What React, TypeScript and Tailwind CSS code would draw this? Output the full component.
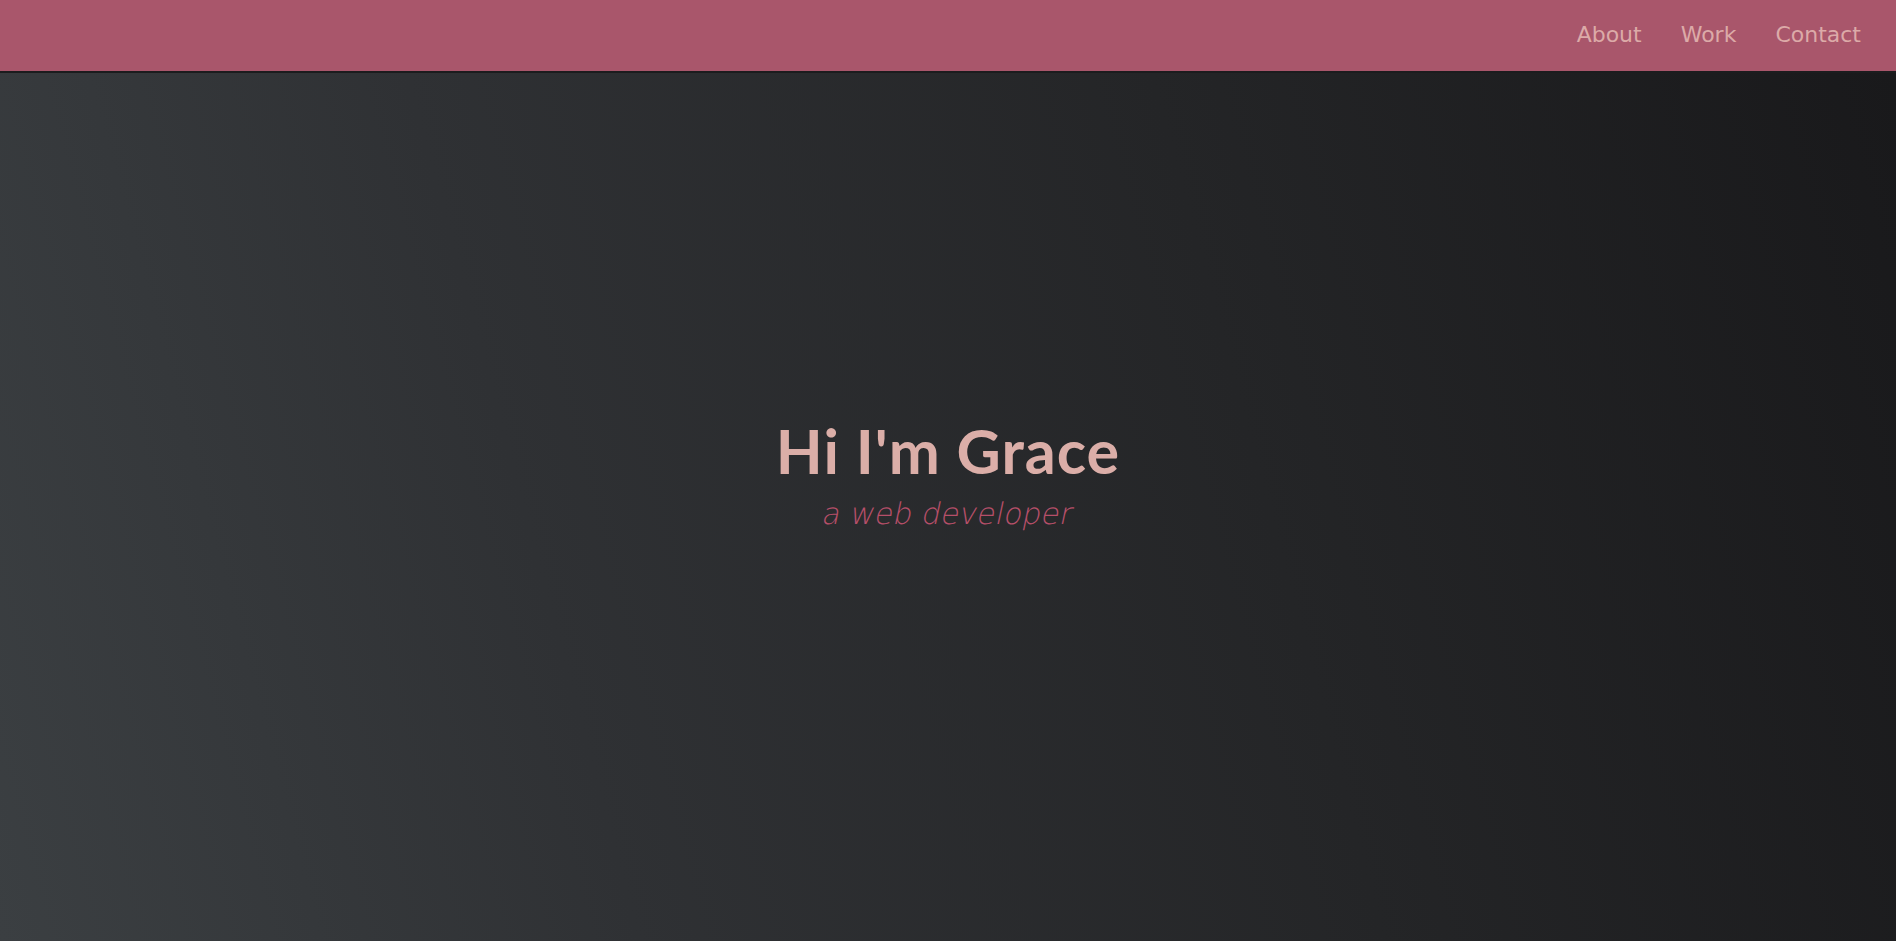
import React from 'react';

const navLinks = ['About', 'Work', 'Contact'];

export default function App() {
  return (
    <div className="min-h-screen flex flex-col bg-[#1c1d1f] font-['Lato','Open_Sans',sans-serif]">
      <header className="h-[73px] shrink-0 bg-[#a9566b] border-b-2 border-[#1c1c1e] flex items-center justify-end pr-[35px]">
        <nav className="flex items-center gap-[39px] font-['DejaVu_Sans','Open_Sans',sans-serif]">
          {navLinks.map(link => (
            <a key={link} href="#" className="text-[22px] text-[#dcaaa8] leading-none -mt-[2px]">
              {link}
            </a>
          ))}
        </nav>
      </header>

      <main className="flex-1 flex flex-col items-center justify-center pb-[68px] bg-[linear-gradient(75deg,#3b3f42_0%,#2f3134_30%,#242527_65%,#19191b_100%)]">
        <h1 className="text-[61px] font-bold text-[#dbaea8] leading-[1.2] tracking-[1px] font-['Lato',sans-serif]">
          Hi I'm Grace
        </h1>
        <p className="inline-block -skew-x-12 text-[30px] font-extralight text-[#b64f69] leading-[1.2] mt-[9px] font-['DejaVu_Sans',sans-serif]">
          a web developer
        </p>
      </main>
    </div>
  );
}
